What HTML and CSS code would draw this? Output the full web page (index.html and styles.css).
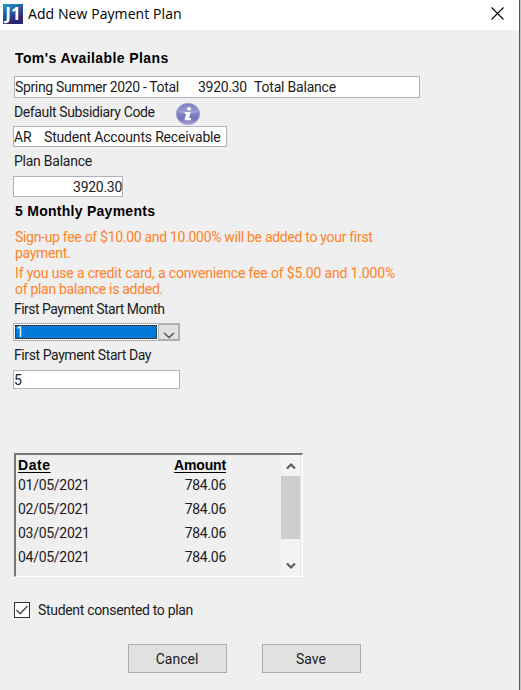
FILE: index.html
```html
<!DOCTYPE html>
<html lang="en">
<head>
<meta charset="utf-8">
<title>Add New Payment Plan</title>
<link rel="stylesheet" href="styles.css">
</head>
<body>
<div class="dialog">
  <header class="titlebar">
    <span class="logo">J1</span>
    <span class="title">Add New Payment Plan</span>
    <svg class="close" width="13" height="13" viewBox="0 0 13 13"><path d="M.5 .5l12 12M12.5 .5l-12 12" stroke="#000" stroke-width="1.1" fill="none"/></svg>
  </header>
  <main class="content">
    <h2 class="heading plans-heading">Tom's Available Plans</h2>
    <div class="field plan-field"><span class="plan-name">Spring Summer 2020 - Total</span><span class="plan-amount">3920.30</span><span class="plan-total">Total Balance</span></div>
    <div class="label code-label"><span>Default Subsidiary Code</span>
      <svg class="info" width="26" height="24" viewBox="0 0 26 24">
        <defs><linearGradient id="ball" x1="0" y1="0" x2="0" y2="1"><stop offset="0" stop-color="#6068b0"/><stop offset=".4" stop-color="#8a90ca"/><stop offset=".7" stop-color="#7075b8"/><stop offset="1" stop-color="#b0a2dc"/></linearGradient></defs>
        <ellipse cx="13" cy="12" rx="11.7" ry="10.7" fill="url(#ball)" stroke="#a5a5cc" stroke-width=".8"/>
        <path d="M3 10a10 8 0 0 1 20 0q-8 3-20 0z" fill="#fff" opacity=".16"/>
        <ellipse cx="14" cy="6.7" rx="2.1" ry="1.8" fill="#fff"/>
        <path d="M10 10h5.6l-1.5 6h2l-.5 2.2h-6.2l1.7-6.2h-1.6z" fill="#fff"/>
      </svg>
    </div>
    <div class="field code-field"><span class="code">AR</span><span class="code-name">Student Accounts Receivable</span></div>
    <div class="label balance-label">Plan Balance</div>
    <div class="field balance-field">3920.30</div>
    <h2 class="heading payments-heading">5 Monthly Payments</h2>
    <p class="notice signup">Sign-up fee of $10.00 and 10.000% will be added to your first<br>payment.</p>
    <p class="notice card-fee"><span class="card-line">If you use a credit card, a convenience fee of $5.00 and 1.000%</span><br>of plan balance is added.</p>
    <div class="label month-label">First Payment Start Month</div>
    <div class="select"><span class="selected">1</span><span class="drop"><svg width="12" height="7" viewBox="0 0 12 7"><path d="M1 1l5 4.6L11 1" fill="none" stroke="#555" stroke-width="1.5"/></svg></span></div>
    <div class="label day-label">First Payment Start Day</div>
    <div class="field day-field">5</div>
    <section class="schedule">
      <div class="rows">
        <div class="row head"><span class="date-head">Date</span><span class="amount-head">Amount</span></div>
        <div class="row"><span>01/05/2021</span><span>784.06</span></div>
        <div class="row"><span>02/05/2021</span><span>784.06</span></div>
        <div class="row"><span>03/05/2021</span><span>784.06</span></div>
        <div class="row"><span>04/05/2021</span><span>784.06</span></div>
      </div>
      <div class="scrollbar">
        <svg class="arrow up" width="10" height="8" viewBox="0 0 10 8"><path d="M1 6.5l4-4 4 4" fill="none" stroke="#5c5c5c" stroke-width="2.2"/></svg>
        <div class="thumb"></div>
        <svg class="arrow down" width="10" height="8" viewBox="0 0 10 8"><path d="M1 1.5l4 4 4-4" fill="none" stroke="#5c5c5c" stroke-width="2.2"/></svg>
      </div>
    </section>
    <div class="consent"><span class="checkbox"><svg width="14" height="14" viewBox="0 0 14 14"><path d="M1.5 7l3.7 3.8L12.5 3" fill="none" stroke="#444" stroke-width="1.4"/></svg></span><span>Student consented to plan</span></div>
    <div class="actions"><button class="button">Cancel</button><button class="button save">Save</button></div>
  </main>
</div>
</body>
</html>
```
FILE: styles.css
```css
* { box-sizing: border-box; }
body { margin: 0; background: #efefef; color: #1c1c22; font: 14px/16px Roboto, "Liberation Sans", sans-serif; }
.dialog { width: 521px; height: 690px; border-right: 1px solid #c4c4c4; box-shadow: inset -1px 0 #55555a; overflow: hidden; white-space: nowrap; }
.titlebar { display: flex; align-items: center; height: 30px; margin-right: 1px; padding: 0 15px 3px 3px; background: #fff; }
.logo { width: 20px; height: 20px; background: linear-gradient(155deg, #1f9fd3 0, #255aa4 40%, #2b2873 75%); color: #fff; font: bold 17px/19px "Open Sans", sans-serif; text-align: center; }
.title { margin-left: 5px; color: #000; font: 14px/20px "Open Sans", sans-serif; letter-spacing: .08px; }
.close { margin-left: auto; }
.content { display: flex; flex-direction: column; padding: 18px 0 0 13px; }
.heading { margin: 0 0 0 2px; color: #000; font: bold 14px/20px "Liberation Sans", sans-serif; }
.plans-heading { letter-spacing: .4px; }
.payments-heading { height: 28px; padding-top: 4px; letter-spacing: .27px; }
.field { display: flex; align-items: center; height: 21px; border: 1px solid #b0b1b9; background: #fff; letter-spacing: -.28px; }
.plan-field { width: 406px; height: 22px; margin: 8px 0 0 1px; }
.plan-name { width: 183px; letter-spacing: -.35px; }
.plan-amount { width: 56px; }
.plan-total { letter-spacing: -.2px; }
.label { margin-left: 1px; }
.code-label { display: flex; align-items: center; height: 28px; letter-spacing: -.37px; }
.info { margin: 3px 0 0 20px; }
.code-field { width: 214px; }
.code { width: 30px; letter-spacing: -.1px; }
.code-name { letter-spacing: -.18px; }
.balance-label { height: 29px; padding-top: 6px; letter-spacing: -.25px; }
.balance-field { width: 110px; justify-content: flex-end; }
.notice { height: 36px; margin: 0 0 0 2px; padding-top: 4px; color: #ff8226; line-height: 16px; letter-spacing: -.3px; }
.signup { padding-top: 4px; }
.card-fee { height: 37px; }
.card-line { letter-spacing: -.16px; }
.month-label { height: 25px; padding-top: 3px; letter-spacing: -.52px; }
.select { display: flex; width: 167px; height: 18px; border: 1px solid #b0b1b9; background: #fff; }
.selected { width: 142px; margin: 1px; border: 1px dotted #222; background: #0078d7; color: #fff; line-height: 13px; }
.drop { display: flex; flex: 1; align-items: flex-end; justify-content: center; border: 1px solid #adadad; background: #e1e1e1; }
.day-label { height: 29px; padding-top: 6px; letter-spacing: -.41px; }
.day-field { width: 167px; height: 19px; }
.schedule { display: flex; width: 289px; height: 124px; margin: 64px 0 0 1px; border: 1px solid #858585; border-width: 2px 1px 1px 2px; border-color: #777 #fff #fff #777; letter-spacing: -.28px; }
.rows { width: 210px; margin-right: auto; padding-left: 2px; }
.row { display: flex; justify-content: space-between; height: 24px; padding-top: 4px; line-height: 16px; }
.head { height: 18px; padding-top: 2px; color: #000; font: bold 14px/16px "Liberation Sans", sans-serif; text-decoration: underline; text-underline-offset: 2px; }
.date-head { letter-spacing: .6px; }
.amount-head { letter-spacing: -.15px; }
.scrollbar { display: flex; flex-direction: column; align-items: center; width: 19px; margin-right: 2px; background: #f3f3f3; }
.arrow { flex: none; margin: 7px 0 6px; }
.thumb { width: 19px; height: 63px; background: #cdcdcd; }
.down { margin: auto 0 6px; }
.consent { display: flex; align-items: center; gap: 8px; height: 18px; margin: 24px 0 0 1px; letter-spacing: -.32px; }
.checkbox { width: 16px; height: 16px; border: 1px solid #333; background: #fff; }
.checkbox svg { display: block; }
.actions { display: flex; gap: 35px; margin: 25px 0 0 115px; }
.button { width: 99px; height: 29px; padding: 0 1px 0 0; border: 1px solid #adadad; background: #e1e1e1; color: #1c1c22; font: inherit; }
```
